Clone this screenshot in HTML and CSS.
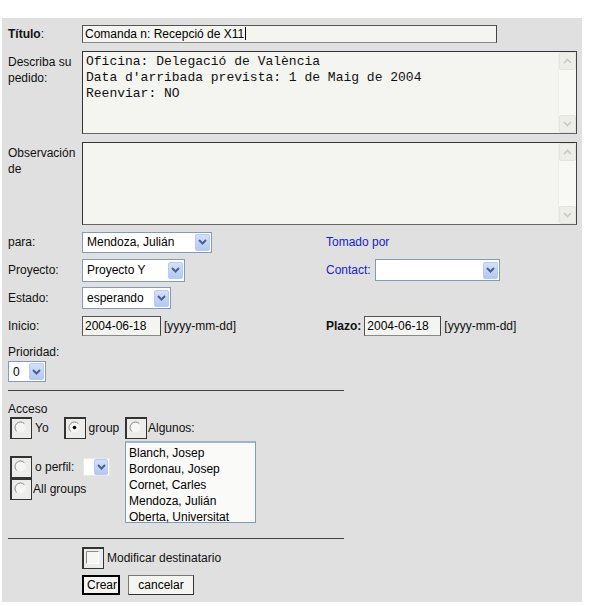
FILE: index.html
```html
<!DOCTYPE html>
<html lang="es">
<head>
    <meta charset="UTF-8">
    <meta name="viewport" content="width=device-width, initial-scale=1.0">
    <title>Nuevo pedido</title>
    <link rel="stylesheet" href="styles.css">
</head>
<body>
    <div class="panel">
        <div class="top-grid">
            <div class="lbl lbl-input"><b>Título</b>:</div>
            <div class="input title-input">Comanda n: Recepció de X11<span class="caret"></span></div>

            <div class="lbl lbl-area">Describa su pedido:</div>
            <div class="textarea">
                <div class="textarea-text">Oficina: Delegació de València
Data d'arribada prevista: 1 de Maig de 2004
Reenviar: NO</div>
                <div class="scrollbar">
                    <span class="sb-btn"><svg width="9" height="6" viewBox="0 0 9 6"><path d="M1 5 L4.5 1.5 L8 5" stroke="#c9c9c2" stroke-width="1.6" fill="none"/></svg></span>
                    <span class="sb-btn"><svg width="9" height="6" viewBox="0 0 9 6"><path d="M1 1 L4.5 4.5 L8 1" stroke="#c9c9c2" stroke-width="1.6" fill="none"/></svg></span>
                </div>
            </div>

            <div class="lbl lbl-area">Observación de</div>
            <div class="textarea">
                <div class="textarea-text"></div>
                <div class="scrollbar">
                    <span class="sb-btn"><svg width="9" height="6" viewBox="0 0 9 6"><path d="M1 5 L4.5 1.5 L8 5" stroke="#c9c9c2" stroke-width="1.6" fill="none"/></svg></span>
                    <span class="sb-btn"><svg width="9" height="6" viewBox="0 0 9 6"><path d="M1 1 L4.5 4.5 L8 1" stroke="#c9c9c2" stroke-width="1.6" fill="none"/></svg></span>
                </div>
            </div>
        </div>

        <div class="field-grid">
            <div class="lbl">para:</div>
            <div><span class="select sel-para"><span class="sel-text">Mendoza, Julián</span><span class="sel-btn"><svg width="9" height="6" viewBox="0 0 9 6"><path d="M1 1 L4.5 4.5 L8 1" stroke="#4d6185" stroke-width="2" fill="none"/></svg></span></span></div>
            <div class="lbl blue">Tomado por</div>

            <div class="lbl">Proyecto:</div>
            <div><span class="select sel-proyecto"><span class="sel-text">Proyecto Y</span><span class="sel-btn"><svg width="9" height="6" viewBox="0 0 9 6"><path d="M1 1 L4.5 4.5 L8 1" stroke="#4d6185" stroke-width="2" fill="none"/></svg></span></span></div>
            <div class="right-field">
                <span class="lbl blue">Contact:</span>
                <span class="select sel-contact"><span class="sel-text"></span><span class="sel-btn"><svg width="9" height="6" viewBox="0 0 9 6"><path d="M1 1 L4.5 4.5 L8 1" stroke="#4d6185" stroke-width="2" fill="none"/></svg></span></span>
            </div>

            <div class="lbl">Estado:</div>
            <div><span class="select sel-estado"><span class="sel-text">esperando</span><span class="sel-btn"><svg width="9" height="6" viewBox="0 0 9 6"><path d="M1 1 L4.5 4.5 L8 1" stroke="#4d6185" stroke-width="2" fill="none"/></svg></span></span></div>
            <div></div>

            <div class="lbl">Inicio:</div>
            <div class="date-field">
                <span class="input date-input">2004-06-18</span>
                <span class="hint">[yyyy-mm-dd]</span>
            </div>
            <div class="date-field">
                <b class="lbl plazo-lbl">Plazo:</b>
                <span class="input date-input plazo-input">2004-06-18</span>
                <span class="hint">[yyyy-mm-dd]</span>
            </div>
        </div>

        <div class="prioridad">
            <div class="lbl">Prioridad:</div>
            <span class="select sel-prio"><span class="sel-text">0</span><span class="sel-btn"><svg width="9" height="6" viewBox="0 0 9 6"><path d="M1 1 L4.5 4.5 L8 1" stroke="#4d6185" stroke-width="2" fill="none"/></svg></span></span>
        </div>

        <hr class="rule">

        <div class="acceso">
            <div class="lbl">Acceso</div>
            <div class="acceso-grid">
                <div class="radio-row">
                    <span class="rbox"><svg width="13" height="13" viewBox="0 0 13 13"><circle cx="6.5" cy="6.5" r="5" fill="#f6f6f4"/><path d="M10.39 2.61 A5.5 5.5 0 0 0 2.61 10.39" stroke="#8a8a8a" fill="none"/></svg></span>
                    <span class="rlabel yo">Yo</span>
                    <span class="rbox"><svg width="13" height="13" viewBox="0 0 13 13"><circle cx="6.5" cy="6.5" r="5" fill="#f6f6f4"/><path d="M10.39 2.61 A5.5 5.5 0 0 0 2.61 10.39" stroke="#8a8a8a" fill="none"/><circle cx="6.5" cy="6.5" r="1.8" fill="#000"/></svg></span>
                    <span class="rlabel">group</span>
                </div>
                <div class="radio-row">
                    <span class="rbox"><svg width="13" height="13" viewBox="0 0 13 13"><circle cx="6.5" cy="6.5" r="5" fill="#f6f6f4"/><path d="M10.39 2.61 A5.5 5.5 0 0 0 2.61 10.39" stroke="#8a8a8a" fill="none"/></svg></span>
                    <span class="rlabel tight">Algunos:</span>
                </div>

                <div class="perfil-stack">
                    <div class="radio-row">
                        <span class="rbox"><svg width="13" height="13" viewBox="0 0 13 13"><circle cx="6.5" cy="6.5" r="5" fill="#f6f6f4"/><path d="M10.39 2.61 A5.5 5.5 0 0 0 2.61 10.39" stroke="#8a8a8a" fill="none"/></svg></span>
                        <span class="rlabel">o perfil:</span>
                        <span class="select sel-perfil"><span class="sel-text"></span><span class="sel-btn"><svg width="9" height="6" viewBox="0 0 9 6"><path d="M1 1 L4.5 4.5 L8 1" stroke="#4d6185" stroke-width="2" fill="none"/></svg></span></span>
                    </div>
                    <div class="radio-row">
                        <span class="rbox"><svg width="13" height="13" viewBox="0 0 13 13"><circle cx="6.5" cy="6.5" r="5" fill="#f6f6f4"/><path d="M10.39 2.61 A5.5 5.5 0 0 0 2.61 10.39" stroke="#8a8a8a" fill="none"/></svg></span>
                        <span class="rlabel tight">All groups</span>
                    </div>
                </div>
                <div class="listbox">
                    <div>Blanch, Josep</div>
                    <div>Bordonau, Josep</div>
                    <div>Cornet, Carles</div>
                    <div>Mendoza, Julián</div>
                    <div>Oberta, Universitat</div>
                </div>
            </div>
        </div>

        <hr class="rule rule-bottom">

        <div class="actions">
            <div class="radio-row">
                <span class="rbox"><svg width="13" height="13" viewBox="0 0 13 13"><rect x="0.5" y="0.5" width="12" height="12" fill="#f6f6f4" stroke="#fff"/><path d="M0.5 12.5 V0.5 H12.5" stroke="#8a8a8a" fill="none"/></svg></span>
                <span class="rlabel">Modificar destinatario</span>
            </div>
            <div class="buttons">
                <span class="btn btn-default">Crear</span>
                <span class="btn">cancelar</span>
            </div>
        </div>
    </div>
</body>
</html>
```

FILE: styles.css
```css
body {
    margin: 0;
    background: #fff;
    font-family: "Liberation Sans", Arial, sans-serif;
    font-size: 12px;
    color: #111;
}
.panel {
    width: 574px;
    margin: 18px 0 0 2px;
    padding: 7px 0 7px 6px;
    background: #e0e0e0;
}
.lbl {
    line-height: 16px;
}
.blue {
    color: #1c1cc8;
}
.top-grid {
    display: grid;
    grid-template-columns: 74px 495px;
    row-gap: 8px;
}
.lbl-input {
    align-self: center;
}
.lbl-area {
    padding-top: 3px;
    padding-right: 4px;
}
.input {
    display: inline-block;
    box-sizing: border-box;
    background: #f4f4f0;
    border: 1px solid #8a8a8a;
    border-top-color: #555;
    border-left-color: #555;
    border-right-color: #444;
    padding: 0 2px;
    line-height: 16px;
    color: #000;
}
.title-input {
    width: 415px;
    height: 18px;
}
.caret {
    display: inline-block;
    width: 1px;
    height: 13px;
    background: #000;
    vertical-align: -2px;
    margin-left: 1px;
}
.textarea {
    display: flex;
    box-sizing: border-box;
    height: 83px;
    background: #f4f4f0;
    border: 1px solid #333;
    border-bottom-color: #666;
    border-right-color: #444;
}
.textarea-text {
    flex: 1;
    padding: 2px 3px;
    font-family: "Liberation Mono", "Courier New", monospace;
    font-size: 13px;
    line-height: 16px;
    white-space: pre;
    color: #111;
}
.scrollbar {
    width: 17px;
    display: flex;
    flex-direction: column;
    justify-content: space-between;
    background: #f8f8f5;
    border-left: 1px solid #eeeeea;
}
.sb-btn {
    display: flex;
    align-items: center;
    justify-content: center;
    height: 16px;
    background: #eeeee9;
    border: 1px solid #e4e4de;
    border-radius: 2px;
}
.field-grid {
    display: grid;
    grid-template-columns: 74px 244px 1fr;
    grid-auto-rows: 22px;
    row-gap: 6px;
    align-items: center;
    margin-top: 6px;
}
.select {
    display: inline-flex;
    align-items: center;
    box-sizing: border-box;
    height: 21px;
    vertical-align: middle;
    background: #fff;
    border: 1px solid #7f9db9;
    padding-left: 4px;
    color: #000;
}
.sel-text {
    flex: 1;
    white-space: nowrap;
}
.sel-btn {
    display: flex;
    align-items: center;
    justify-content: center;
    width: 15px;
    height: 17px;
    margin: 0 1px 0 4px;
    border: 1px solid #b9cbf3;
    border-radius: 2px;
    box-sizing: border-box;
    background: linear-gradient(#d4e0fb, #b4c8f5);
}
.sel-para {
    width: 130px;
}
.sel-proyecto {
    width: 103px;
    height: 23px;
}
.sel-estado {
    width: 89px;
    height: 22px;
}
.sel-contact {
    width: 125px;
    height: 22px;
    margin-left: 4px;
}
.sel-prio {
    width: 38px;
    margin-top: 1px;
}
.sel-perfil {
    width: 27px;
    height: 18px;
    margin-left: 9px;
    border-color: #e8e8e8;
    padding-left: 0;
}
.sel-perfil .sel-btn {
    height: 16px;
    margin-left: 10px;
}
.right-field {
    display: flex;
    align-items: center;
}
.date-field {
    display: flex;
    align-items: center;
}
.date-input {
    width: 79px;
    height: 20px;
    line-height: 18px;
}
.plazo-lbl {
    margin-right: 3px;
}
.plazo-input {
    width: 77px;
}
.hint {
    margin-left: 3px;
}
.prioridad {
    margin-top: 7px;
}
.rule {
    width: 336px;
    margin: 8px 0 0;
    border: 0;
    border-top: 1px solid #444;
}
.acceso {
    margin-top: 10px;
}
.acceso-grid {
    display: grid;
    grid-template-columns: 115px auto;
    row-gap: 2px;
    margin-left: 2px;
}
.radio-row {
    display: flex;
    align-items: center;
    height: 22px;
}
.rbox {
    box-sizing: border-box;
    width: 22px;
    height: 22px;
    padding: 2px;
    background: #ececea;
    border: 1px solid #333;
    border-top-width: 2px;
    border-left-width: 2px;
}
.rbox svg {
    display: block;
}
.rlabel {
    margin-left: 3px;
}
.yo {
    margin-right: 15px;
}
.tight {
    margin-left: 1px;
}
.perfil-stack {
    margin-top: 15px;
}
.listbox {
    box-sizing: border-box;
    width: 131px;
    height: 82px;
    padding: 2px 3px;
    background: #fafaf8;
    border: 1px solid #7f9db9;
    border-top: 2px solid #9fb4c9;
    line-height: 16px;
    color: #000;
}
.rule-bottom {
    margin-top: 15px;
}
.actions {
    margin: 8px 0 0 74px;
}
.buttons {
    display: flex;
    gap: 8px;
    margin-top: 6px;
}
.btn {
    box-sizing: border-box;
    height: 20px;
    padding: 0 6px;
    line-height: 18px;
    background: #f4f4f0;
    border: 1px solid #333;
    border-top-color: #777;
    border-left-color: #777;
    color: #000;
}
.btn-default {
    border: 2px solid #000;
    line-height: 16px;
    padding: 0 3px;
    width: 38px;
}
.btn:last-child {
    width: 66px;
    text-align: center;
}
```
